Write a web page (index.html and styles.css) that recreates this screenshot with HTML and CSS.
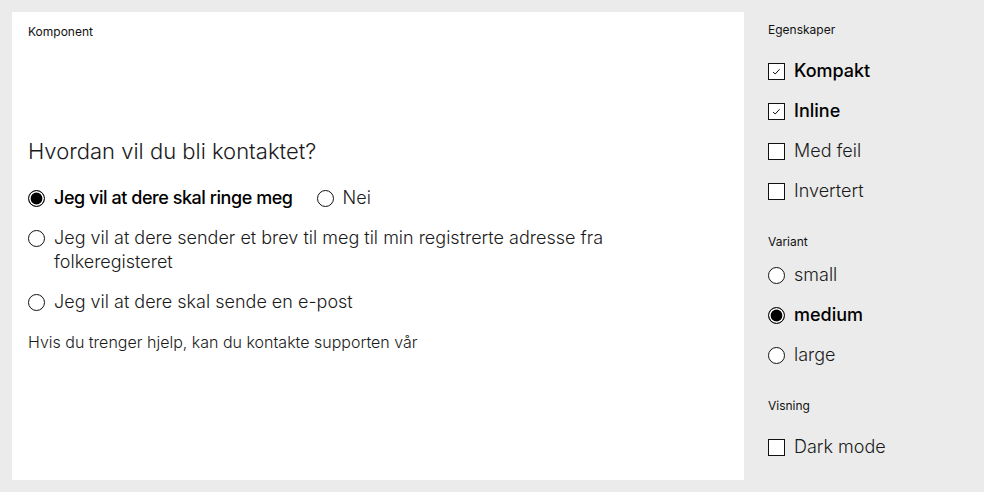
FILE: index.html
```html
<!DOCTYPE html>
<html lang="no">
<head>
<meta charset="utf-8">
<title>Komponent</title>
<link rel="stylesheet" href="styles.css">
</head>
<body>
<div class="layout">
  <main class="panel">
    <div class="panel-label">Komponent</div>
    <div class="stage">
      <fieldset class="group">
        <legend class="legend">Hvordan vil du bli kontaktet?</legend>
        <div class="options">
          <div class="inline">
            <label class="opt selected tight"><span class="radio on"></span><span class="txt">Jeg vil at dere skal ringe meg</span></label>
            <label class="opt"><span class="radio"></span><span class="txt">Nei</span></label>
          </div>
          <label class="opt"><span class="radio"></span><span class="txt">Jeg vil at dere sender et brev til meg til min registrerte adresse fra folkeregisteret</span></label>
          <label class="opt"><span class="radio"></span><span class="txt">Jeg vil at dere skal sende en e-post</span></label>
        </div>
        <p class="help">Hvis du trenger hjelp, kan du kontakte supporten vår</p>
      </fieldset>
    </div>
  </main>
  <aside class="side">
    <div class="sec-title first">Egenskaper</div>
    <div class="rows">
      <label class="opt side-opt selected"><span class="box"><svg viewBox="0 0 17 17" width="17" height="17"><path d="M5 9 L7.2 11 L11.6 6.2" fill="none" stroke="#111" stroke-width="1"/></svg></span><span class="txt">Kompakt</span></label>
      <label class="opt side-opt selected"><span class="box"><svg viewBox="0 0 17 17" width="17" height="17"><path d="M5 9 L7.2 11 L11.6 6.2" fill="none" stroke="#111" stroke-width="1"/></svg></span><span class="txt">Inline</span></label>
      <label class="opt side-opt"><span class="box"></span><span class="txt">Med feil</span></label>
      <label class="opt side-opt"><span class="box"></span><span class="txt">Invertert</span></label>
    </div>
    <div class="sec-title variant">Variant</div>
    <div class="rows">
      <label class="opt side-opt"><span class="radio"></span><span class="txt">small</span></label>
      <label class="opt side-opt selected"><span class="radio on"></span><span class="txt">medium</span></label>
      <label class="opt side-opt"><span class="radio"></span><span class="txt">large</span></label>
    </div>
    <div class="sec-title visning">Visning</div>
    <div class="rows">
      <label class="opt side-opt"><span class="box"></span><span class="txt">Dark mode</span></label>
    </div>
  </aside>
</div>
</body>
</html>
```
FILE: styles.css
```css
* { box-sizing: border-box; }
html, body { margin: 0; padding: 0; }
body {
  background: #ebebeb;
  font-family: Inter, "Liberation Sans", sans-serif;
  color: #1c1c1c;
  width: 984px;
  height: 492px;
  overflow: hidden;
}
.layout {
  display: flex;
  padding: 12px 0 12px 12px;
  height: 492px;
}
.panel {
  width: 732px;
  height: 468px;
  background: #fff;
  padding: 12px 16px;
  display: flex;
  flex-direction: column;
}
.panel-label {
  font-size: 12px;
  line-height: 16px;
  color: #111;
}
.stage {
  padding-top: 97px;
}
.group { border: 0; margin: 0; padding: 0; min-width: 0; }
.legend {
  padding: 0;
  font-size: 22px;
  line-height: 28px;
  font-weight: 300;
  color: #1a1a1a;
  margin-bottom: 13px;
}
.options { display: flex; flex-direction: column; }
.inline { display: flex; gap: 24px; }
.opt {
  display: flex;
  align-items: flex-start;
  gap: 9px;
  padding: 8px 0;
  font-size: 18px;
  line-height: 24px;
  font-weight: 300;
  color: #1a1a1a;
  max-width: 600px;
}
.opt.selected { font-weight: 500; color: #000; }
.opt.tight { letter-spacing: -0.45px; }
.radio, .box {
  flex: none;
  width: 17px;
  height: 17px;
  margin-top: 3.5px;
  border: 1px solid #111;
  background: #fff;
}
.radio { border-radius: 50%; }
.radio.on { background: #000; box-shadow: inset 0 0 0 1.6px #fff; }
.box svg { display: block; margin: -1px; }
.help {
  margin: 10px 0 0;
  font-size: 16px;
  line-height: 20px;
  font-weight: 300;
  color: #1a1a1a;
}
.side {
  padding-left: 24px;
  padding-top: 10px;
  flex: 1;
}
.sec-title {
  font-size: 12px;
  line-height: 16px;
  color: #111;
}
.sec-title.variant { margin-top: 23px; margin-bottom: 5px; }
.sec-title.visning { margin-top: 23px; }
.first + .rows, .visning + .rows { margin-top: 13px; }
.rows { display: flex; flex-direction: column; }
.side-opt { height: 40px; }
```
